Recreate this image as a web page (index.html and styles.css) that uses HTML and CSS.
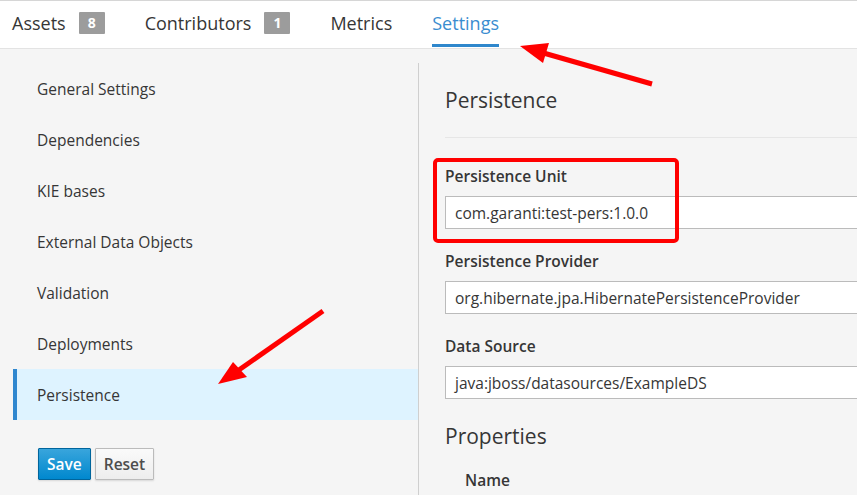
FILE: index.html
```html
<!DOCTYPE html>
<html>
<head>
<meta charset="utf-8">
<link rel="stylesheet" href="styles.css">
</head>
<body>
<div class="page">
  <nav class="tabs">
    <div class="tab">Assets <span class="badge">8</span></div>
    <div class="tab">Contributors <span class="badge">1</span></div>
    <div class="tab">Metrics</div>
    <div class="tab active">Settings</div>
  </nav>
  <div class="main">
    <aside class="sidebar">
      <ul class="menu">
        <li class="item">General Settings</li>
        <li class="item">Dependencies</li>
        <li class="item">KIE bases</li>
        <li class="item">External Data Objects</li>
        <li class="item">Validation</li>
        <li class="item">Deployments</li>
        <li class="item selected">Persistence</li>
      </ul>
      <div class="actions">
        <button class="btn primary">Save</button>
        <button class="btn">Reset</button>
      </div>
    </aside>
    <section class="content">
      <h2 class="title">Persistence</h2>
      <hr class="rule">
      <div class="group">
        <label class="label">Persistence Unit</label>
        <div class="input">com.garanti:test-pers:1.0.0</div>
      </div>
      <div class="group">
        <label class="label">Persistence Provider</label>
        <div class="input">org.hibernate.jpa.HibernatePersistenceProvider</div>
      </div>
      <div class="group">
        <label class="label">Data Source</label>
        <div class="input">java:jboss/datasources/ExampleDS</div>
      </div>
      <h2 class="title props">Properties</h2>
      <div class="th">Name</div>
    </section>
  </div>
  <svg class="annot" width="857" height="495" viewBox="0 0 857 495">
    <rect x="435" y="160" width="242" height="81" rx="3" fill="none" stroke="#ff0000" stroke-width="4"/>
    <line x1="652" y1="84" x2="540" y2="52" stroke="#ff0000" stroke-width="5"/>
    <polygon points="520,46 549,43 543,63" fill="#ff0000"/>
    <line x1="323" y1="311" x2="236" y2="372" stroke="#ff0000" stroke-width="5"/>
    <polygon points="218,384 233,362 247,377" fill="#ff0000"/>
  </svg>
</div>
</body>
</html>
```
FILE: styles.css
```css
* { box-sizing: border-box; }
html, body { margin: 0; padding: 0; }
body {
  font-family: "Open Sans", "Liberation Sans", sans-serif;
  color: #363636;
  background: #f5f5f5;
  overflow: hidden;
  width: 857px;
  height: 495px;
}
.page { position: relative; width: 857px; height: 495px; overflow: hidden; }
.tabs {
  display: flex;
  gap: 40px;
  height: 49px;
  padding-left: 12px;
  background: #fff;
  border-top: 1px solid #d6d6d6;
  border-bottom: 1px solid #e3e3e3;
}
.tab {
  display: flex;
  align-items: center;
  height: 46px;
  font-size: 18px;
  color: #363636;
  border-bottom: 3px solid transparent;
  white-space: nowrap;
}
.tab.active { color: #3a8dd0; border-bottom-color: #2f87cc; }
.badge {
  display: inline-flex;
  align-items: center;
  justify-content: center;
  width: 26px;
  height: 22px;
  margin-left: 13px;
  background: #9c9c9c;
  color: #fff;
  font-size: 14px;
  font-weight: 700;
  border-radius: 1px;
}
.main { display: flex; padding-top: 14px; height: 446px; }
.sidebar {
  margin-left: 13px;
  width: 406px;
  border-right: 1px solid #cfcfcf;
  flex-shrink: 0;
}
.menu { list-style: none; margin: 0; padding: 0; }
.item {
  display: flex;
  align-items: center;
  height: 51px;
  padding-left: 24px;
  font-size: 15.5px;
  color: #363636;
}
.item.selected {
  background: #def3ff;
  border-left: 4px solid #2f87cf;
  padding-left: 20px;
}
.actions { display: flex; gap: 4px; margin-top: 28px; padding-left: 25px; }
.btn {
  font-family: inherit;
  font-size: 15.5px;
  font-weight: 600;
  height: 32px;
  padding: 0 8px;
  border: 1px solid #bbb;
  border-radius: 1px;
  background: linear-gradient(#fafafa, #ededed);
  color: #4d4d4d;
  box-shadow: 0 1px 2px rgba(0,0,0,0.12);
}
.btn.primary {
  background: linear-gradient(#39a5dc, #0088ce);
  border-color: #00659c;
  color: #fff;
}
.content { padding-left: 26px; padding-top: 24px; flex: 1; min-width: 0; }
.title {
  margin: 0;
  font-size: 21px;
  font-weight: 400;
  line-height: 26px;
  color: #363636;
}
.rule { margin: 24px 0 28px; border: 0; border-top: 1px solid #e6e6e6; width: 600px; }
.group { margin-bottom: 22px; }
.label {
  display: block;
  font-size: 15.5px;
  font-weight: 600;
  line-height: 21px;
  margin-bottom: 9px;
}
.input {
  height: 33px;
  width: 600px;
  background: #fff;
  border: 1px solid #bbb;
  padding-left: 9px;
  display: flex;
  align-items: center;
  font-size: 15.5px;
  color: #363636;
  white-space: nowrap;
}
.props { margin-top: 24px; }
.th {
  margin-top: 21px;
  padding-left: 20px;
  font-size: 15.5px;
  font-weight: 600;
  line-height: 21px;
}
.annot { position: absolute; left: 0; top: 0; pointer-events: none; }
```
